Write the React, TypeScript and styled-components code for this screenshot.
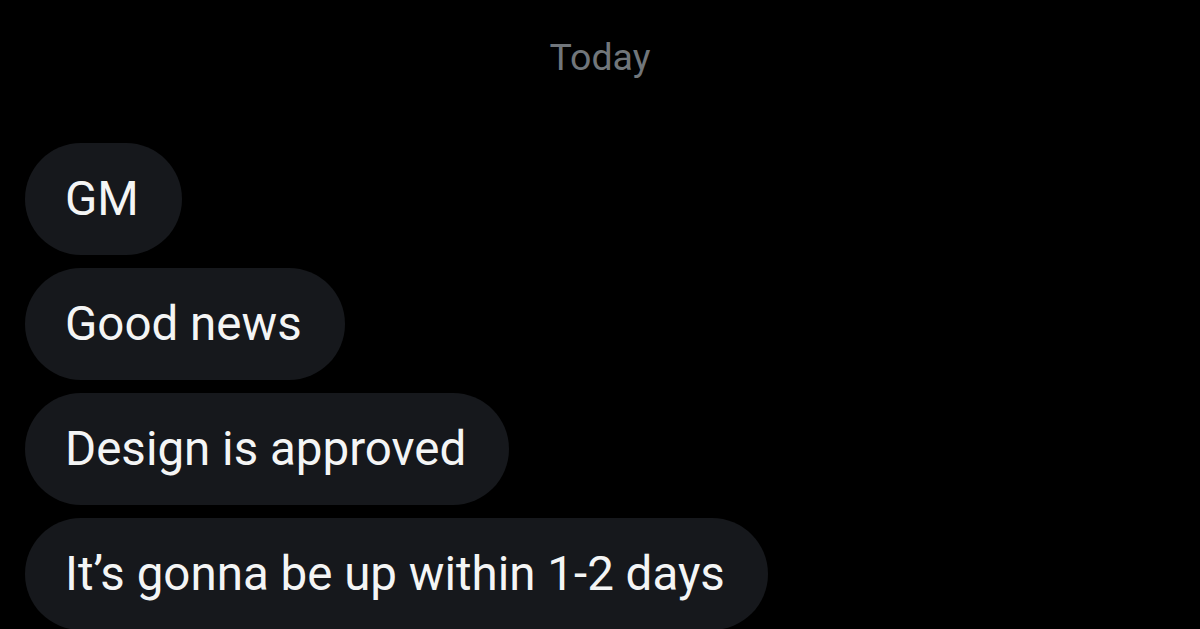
import React from "react";
import styled, { createGlobalStyle } from "styled-components";

const Global = createGlobalStyle`
  html, body {
    margin: 0;
    padding: 0;
    background: #000000;
    overflow: hidden;
  }
  body {
    font-family: Roboto, "Liberation Sans", sans-serif;
  }
`;

const Page = styled.div`
  width: 1200px;
  height: 629px;
  display: flex;
  flex-direction: column;
  background: #000000;
  overflow: hidden;
`;

const DateLabel = styled.div`
  align-self: center;
  margin-top: 35px;
  color: #71767b;
  font-size: 37.5px;
  line-height: 44px;
`;

const Thread = styled.div`
  display: flex;
  flex-direction: column;
  align-items: flex-start;
  gap: 13px;
  padding: 64px 0 0 25px;
`;

const Bubble = styled.div`
  display: flex;
  align-items: center;
  height: 112px;
  box-sizing: border-box;
  padding: 0 43px 0 40px;
  border-radius: 56px;
  background: #16181c;
  color: #f4f5f5;
  font-size: 47.5px;
  white-space: nowrap;
`;

const messages = [
  "GM",
  "Good news",
  "Design is approved",
  "It\u2019s gonna be up within 1-2 days",
];

export default function App() {
  return (
    <Page>
      <Global />
      <DateLabel>Today</DateLabel>
      <Thread>
        {messages.map((m) => (
          <Bubble key={m}>{m}</Bubble>
        ))}
      </Thread>
    </Page>
  );
}
